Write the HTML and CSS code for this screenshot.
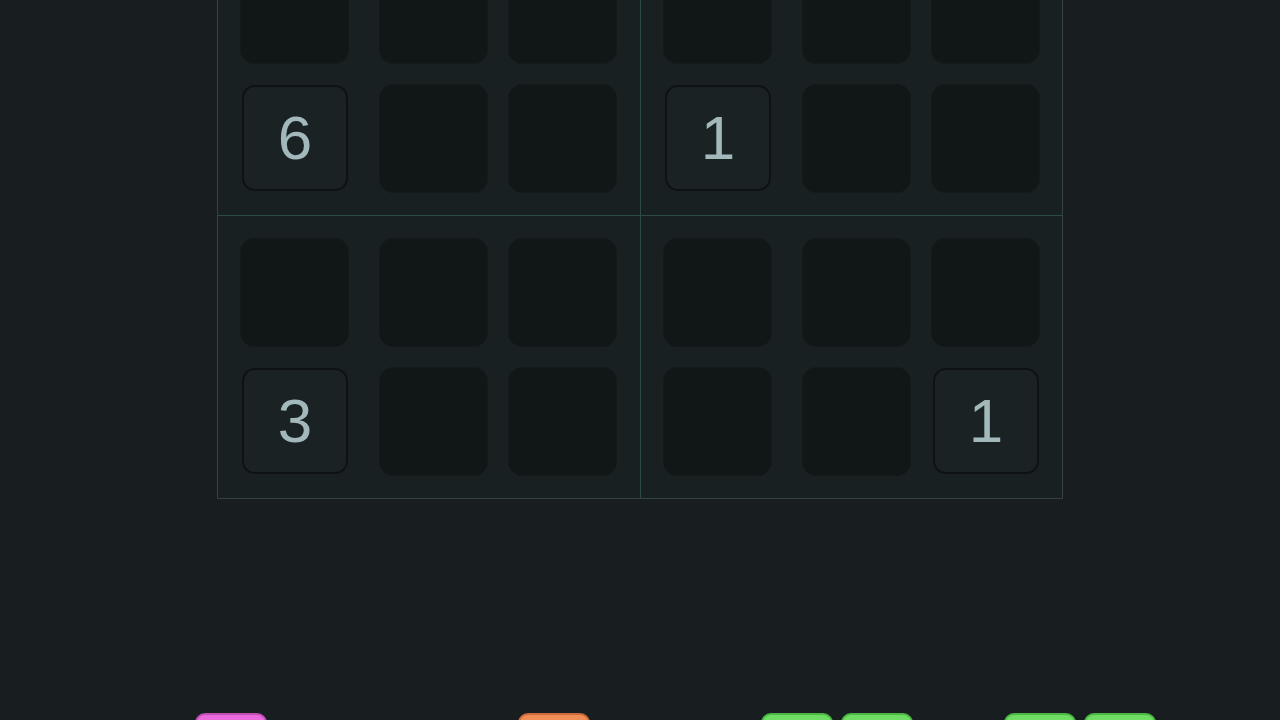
FILE: index.html
```html
<!DOCTYPE html>
<html lang="en">
<head>
<meta charset="utf-8">
<title>Sudoku</title>
<link rel="stylesheet" href="styles.css">
</head>
<body>
<main class="page">
  <section class="board">
    <div class="box">
      <div class="cell"></div><div class="cell"></div><div class="cell"></div>
      <div class="cell given">6</div><div class="cell"></div><div class="cell"></div>
    </div>
    <div class="box">
      <div class="cell"></div><div class="cell"></div><div class="cell"></div>
      <div class="cell given">1</div><div class="cell"></div><div class="cell"></div>
    </div>
    <div class="box">
      <div class="cell"></div><div class="cell"></div><div class="cell"></div>
      <div class="cell given">3</div><div class="cell"></div><div class="cell"></div>
    </div>
    <div class="box">
      <div class="cell"></div><div class="cell"></div><div class="cell"></div>
      <div class="cell"></div><div class="cell"></div><div class="cell given">1</div>
    </div>
  </section>
  <nav class="tabs">
    <div class="tab pink"></div>
    <div class="tab orange"></div>
    <div class="tab green g1"></div>
    <div class="tab green g2"></div>
    <div class="tab green g3"></div>
    <div class="tab green g4"></div>
  </nav>
</main>
</body>
</html>
```

FILE: styles.css
```css
html, body {
  margin: 0;
  padding: 0;
  background: #181e20;
  height: 100%;
  overflow: hidden;
  font-family: "Liberation Sans", Arial, sans-serif;
}

.page {
  display: flex;
  flex-direction: column;
}

.board {
  margin-top: -68px;
  margin-left: 217px;
  width: 844px;
  border: 1px solid #334143;
  display: grid;
  grid-template-columns: 422px 422px;
  background: #182022;
}

.box {
  box-sizing: border-box;
  height: 283px;
  padding: 22px 0 0 22px;
  display: grid;
  grid-template-columns: 109px 119px 109px;
  grid-template-rows: 109px 109px;
  column-gap: 20px;
  row-gap: 20px;
  align-content: start;
}

.box:nth-child(1),
.box:nth-child(3) {
  border-right: 1px solid #2c4a4a;
  width: 423px;
}

.box:nth-child(2),
.box:nth-child(4) {
  margin-left: 1px;
  width: 421px;
}

.box:nth-child(1),
.box:nth-child(2) {
  border-bottom: 1px solid #2c4a4a;
}

.box:nth-child(3),
.box:nth-child(4) {
  height: 282px;
}

.cell {
  width: 109px;
  height: 109px;
  box-sizing: border-box;
  border-radius: 14px;
  background: #111617;
  border: 1px solid #131a1b;
}

.cell:nth-child(3n+2) {
  justify-self: end;
}

.cell.given {
  margin: 1px 2px 2px 2px;
  width: 106px;
  height: 106px;
  background: #1a2224;
  border: 2px solid #0e1213;
  border-radius: 13px;
  display: flex;
  align-items: center;
  justify-content: center;
  color: #a2b8bb;
  font-size: 62px;
  line-height: 1;
}

.tabs {
  display: flex;
  margin-top: 214px;
  padding-left: 195px;
}

.tab {
  width: 72px;
  height: 40px;
  box-sizing: border-box;
  border-radius: 10px 10px 0 0;
  border: 2px solid;
  border-bottom: none;
}

.pink {
  background: #ea6adb;
  border-color: #bf4fb5;
}

.orange {
  margin-left: 251px;
  background: #f08d57;
  border-color: #cc6a3b;
}

.green {
  background: #6fdc63;
  border-color: #4bb644;
}

.g1 { margin-left: 171px; }
.g2 { margin-left: 8px; }
.g3 { margin-left: 91px; }
.g4 { margin-left: 8px; }
```
